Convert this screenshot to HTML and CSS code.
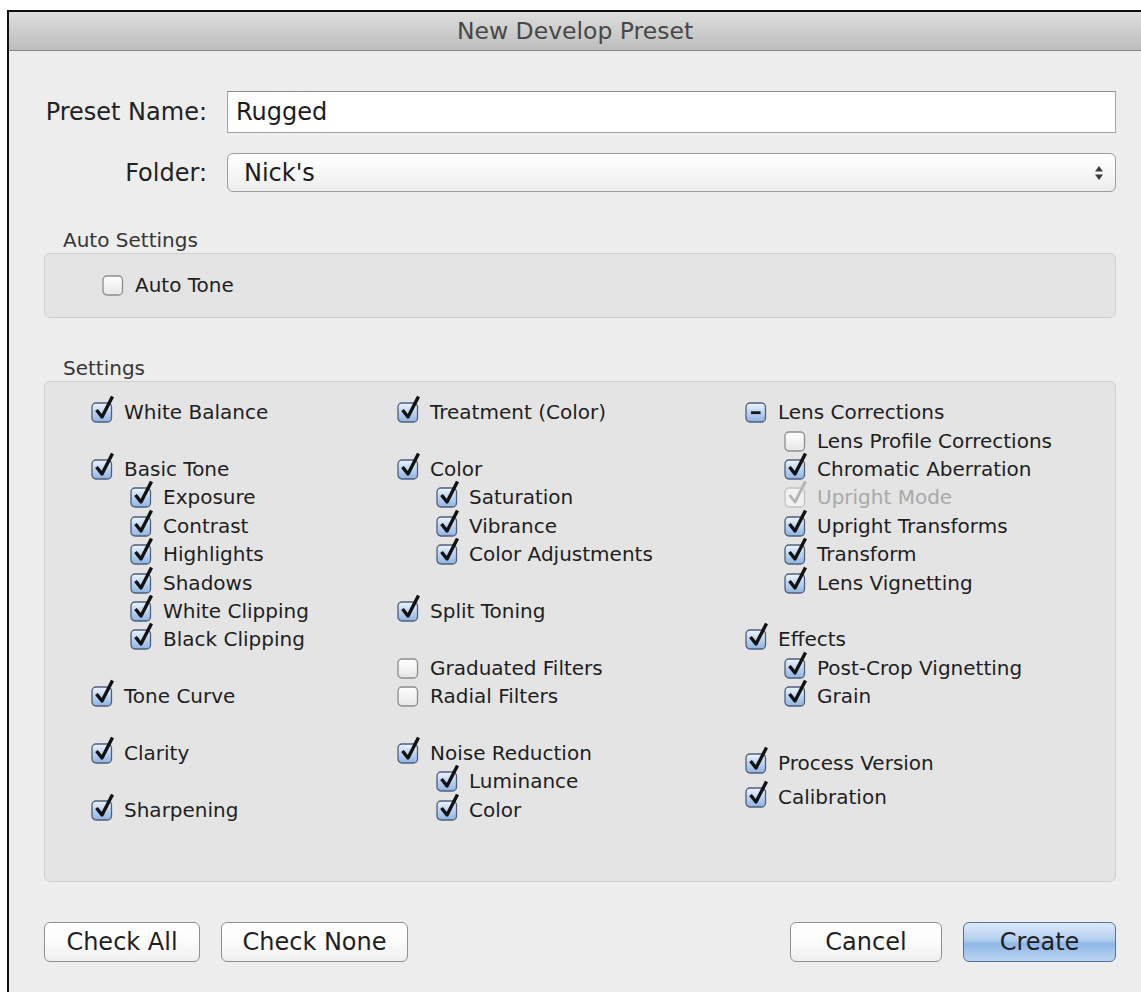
FILE: index.html
```html
<!DOCTYPE html>
<html lang="en">
<head>
<meta charset="utf-8">
<title>New Develop Preset</title>
<link rel="stylesheet" href="styles.css">
</head>
<body>
<!-- shared checkbox artwork -->
<svg class="defs" aria-hidden="true">
  <defs>
    <linearGradient id="g-blue" x1="0" y1="0" x2="0" y2="1">
      <stop offset="0" stop-color="#eef5fd"/>
      <stop offset="0.5" stop-color="#bcd3f0"/>
      <stop offset="1" stop-color="#8fb3e2"/>
    </linearGradient>
    <linearGradient id="g-white" x1="0" y1="0" x2="0" y2="1">
      <stop offset="0" stop-color="#ffffff"/>
      <stop offset="1" stop-color="#e6e6e6"/>
    </linearGradient>
    <symbol id="cb-on" viewBox="0 0 24 28">
      <rect x="1" y="8" width="19.5" height="19" rx="4" fill="url(#g-blue)" stroke="#4e5f7c" stroke-width="1.3"/>
      <path d="M5.5 15 L11 22 L21.5 1.5" fill="none" stroke="#121212" stroke-width="3.4" stroke-linejoin="round"/>
    </symbol>
    <symbol id="cb-off" viewBox="0 0 24 28">
      <rect x="1" y="8" width="19.5" height="19" rx="4" fill="url(#g-white)" stroke="#8d8d8d" stroke-width="1.3"/>
    </symbol>
    <symbol id="cb-mixed" viewBox="0 0 24 28">
      <rect x="1" y="8" width="19.5" height="19" rx="4" fill="url(#g-blue)" stroke="#4e5f7c" stroke-width="1.3"/>
      <rect x="6" y="16.3" width="9.5" height="2.8" fill="#151515"/>
    </symbol>
    <symbol id="cb-dim" viewBox="0 0 24 28">
      <rect x="1" y="8" width="19.5" height="19" rx="4" fill="#f1f1f1" stroke="#c2c2c2" stroke-width="1.3"/>
      <path d="M5.5 15 L11 22 L21.5 1.5" fill="none" stroke="#b4b4b4" stroke-width="2.8" stroke-linejoin="round"/>
    </symbol>
  </defs>
</svg>

<div class="dialog">
  <div class="titlebar">New Develop Preset</div>

  <div class="content">
    <div class="field">
      <label class="field-label">Preset Name:</label>
      <div class="textbox">Rugged</div>
    </div>
    <div class="field">
      <label class="field-label">Folder:</label>
      <div class="popup">
        <span>Nick's</span>
        <svg class="stepper" viewBox="0 0 10 16" width="10" height="16">
          <path d="M1 6.5 L5 1 L9 6.5 Z" fill="#3a3a3a"/>
          <path d="M1 9.5 L5 15 L9 9.5 Z" fill="#3a3a3a"/>
        </svg>
      </div>
    </div>

    <div class="group-title first">Auto Settings</div>
    <div class="group auto">
      <div class="item"><svg class="cb"><use href="#cb-off"/></svg>Auto Tone</div>
    </div>

    <div class="group-title">Settings</div>
    <div class="group settings">
      <div class="col">
        <div class="item"><svg class="cb"><use href="#cb-on"/></svg>White Balance</div>
        <div class="blank"></div>
        <div class="item"><svg class="cb"><use href="#cb-on"/></svg>Basic Tone</div>
        <div class="item sub"><svg class="cb"><use href="#cb-on"/></svg>Exposure</div>
        <div class="item sub"><svg class="cb"><use href="#cb-on"/></svg>Contrast</div>
        <div class="item sub"><svg class="cb"><use href="#cb-on"/></svg>Highlights</div>
        <div class="item sub"><svg class="cb"><use href="#cb-on"/></svg>Shadows</div>
        <div class="item sub"><svg class="cb"><use href="#cb-on"/></svg>White Clipping</div>
        <div class="item sub"><svg class="cb"><use href="#cb-on"/></svg>Black Clipping</div>
        <div class="blank"></div>
        <div class="item"><svg class="cb"><use href="#cb-on"/></svg>Tone Curve</div>
        <div class="blank"></div>
        <div class="item"><svg class="cb"><use href="#cb-on"/></svg>Clarity</div>
        <div class="blank"></div>
        <div class="item"><svg class="cb"><use href="#cb-on"/></svg>Sharpening</div>
      </div>

      <div class="col">
        <div class="item"><svg class="cb"><use href="#cb-on"/></svg>Treatment (Color)</div>
        <div class="blank"></div>
        <div class="item"><svg class="cb"><use href="#cb-on"/></svg>Color</div>
        <div class="item sub"><svg class="cb"><use href="#cb-on"/></svg>Saturation</div>
        <div class="item sub"><svg class="cb"><use href="#cb-on"/></svg>Vibrance</div>
        <div class="item sub"><svg class="cb"><use href="#cb-on"/></svg>Color Adjustments</div>
        <div class="blank"></div>
        <div class="item"><svg class="cb"><use href="#cb-on"/></svg>Split Toning</div>
        <div class="blank"></div>
        <div class="item"><svg class="cb"><use href="#cb-off"/></svg>Graduated Filters</div>
        <div class="item"><svg class="cb"><use href="#cb-off"/></svg>Radial Filters</div>
        <div class="blank"></div>
        <div class="item"><svg class="cb"><use href="#cb-on"/></svg>Noise Reduction</div>
        <div class="item sub"><svg class="cb"><use href="#cb-on"/></svg>Luminance</div>
        <div class="item sub"><svg class="cb"><use href="#cb-on"/></svg>Color</div>
      </div>

      <div class="col">
        <div class="item"><svg class="cb"><use href="#cb-mixed"/></svg>Lens Corrections</div>
        <div class="item sub"><svg class="cb"><use href="#cb-off"/></svg>Lens Profile Corrections</div>
        <div class="item sub"><svg class="cb"><use href="#cb-on"/></svg>Chromatic Aberration</div>
        <div class="item sub disabled"><svg class="cb"><use href="#cb-dim"/></svg>Upright Mode</div>
        <div class="item sub"><svg class="cb"><use href="#cb-on"/></svg>Upright Transforms</div>
        <div class="item sub"><svg class="cb"><use href="#cb-on"/></svg>Transform</div>
        <div class="item sub"><svg class="cb"><use href="#cb-on"/></svg>Lens Vignetting</div>
        <div class="blank"></div>
        <div class="item"><svg class="cb"><use href="#cb-on"/></svg>Effects</div>
        <div class="item sub"><svg class="cb"><use href="#cb-on"/></svg>Post-Crop Vignetting</div>
        <div class="item sub"><svg class="cb"><use href="#cb-on"/></svg>Grain</div>
        <div class="item spaced"><svg class="cb"><use href="#cb-on"/></svg>Process Version</div>
        <div class="item nudged"><svg class="cb"><use href="#cb-on"/></svg>Calibration</div>
      </div>
    </div>

    <div class="buttons">
      <div class="btn-group">
        <button class="btn check-all">Check All</button>
        <button class="btn check-none">Check None</button>
      </div>
      <div class="btn-group">
        <button class="btn cancel">Cancel</button>
        <button class="btn primary">Create</button>
      </div>
    </div>
  </div>
</div>
</body>
</html>
```

FILE: styles.css
```css
html, body {
  margin: 0;
  padding: 0;
  background: #ffffff;
}

body {
  font-family: "DejaVu Sans", "Liberation Sans", sans-serif;
  color: #1c1c1c;
  overflow: hidden;
}

.defs {
  position: absolute;
  width: 0;
  height: 0;
  overflow: hidden;
}

.dialog {
  margin: 10px 0 0 7px;
  height: 982px;
  border-top: 2px solid #101010;
  border-left: 2px solid #101010;
  background: #ededed;
  box-sizing: border-box;
}

.titlebar {
  height: 38px;
  line-height: 38px;
  text-align: center;
  font-size: 23.5px;
  color: #474747;
  background: linear-gradient(#dedede, #d0d0d0 40%, #bdbdbd);
  border-bottom: 1px solid #868686;
}

.content {
  padding: 40px 25px 0 0;
}

/* name / folder rows */
.field {
  display: flex;
  align-items: center;
  margin-bottom: 20px;
}

.field-label {
  width: 198px;
  margin-right: 20px;
  text-align: right;
  font-size: 24px;
  color: #222;
}

.textbox {
  flex: 1;
  height: 42px;
  box-sizing: border-box;
  padding: 0 8px;
  display: flex;
  align-items: center;
  font-size: 24px;
  background: #fefefe;
  border: 1px solid #a2a2a2;
  border-top-color: #8c8c8c;
}

.popup {
  flex: 1;
  height: 39px;
  box-sizing: border-box;
  padding: 0 11px 0 16px;
  display: flex;
  align-items: center;
  justify-content: space-between;
  font-size: 24px;
  border: 1px solid #9c9c9c;
  border-radius: 6px;
  background: linear-gradient(#ffffff, #f7f7f7 50%, #ececec);
}

.stepper {
  display: block;
}

/* grouped boxes */
.group-title {
  margin: 38px 0 0 54px;
  height: 24px;
  line-height: 24px;
  font-size: 20px;
  color: #363636;
}

.group-title.first {
  margin-top: 36px;
}

.group {
  margin: 1px 0 0 35px;
  border: 1px solid #cfcfcf;
  border-radius: 6px;
  background: #e4e4e4;
  box-sizing: border-box;
}

.group.auto {
  height: 65px;
  padding-left: 57px;
  display: flex;
  align-items: center;
}

.group.settings {
  height: 501px;
  padding: 16px 0 0 46px;
  display: grid;
  grid-template-columns: 306px 348px 1fr;
  align-items: start;
}

.col {
  display: flex;
  flex-direction: column;
}

.item {
  height: 28.4px;
  display: flex;
  align-items: center;
  font-size: 20px;
  color: #1e1e1e;
  white-space: nowrap;
}

.blank {
  height: 28.4px;
}

.item.sub {
  padding-left: 39px;
}

.item.disabled {
  color: #a9a9a9;
}

.item.spaced {
  margin-top: 39px;
}

.item.nudged {
  margin-top: 5px;
}

.cb {
  width: 24px;
  height: 28px;
  flex: none;
  margin: -6px 9px 0 0;
}

/* bottom buttons */
.buttons {
  margin: 40px 0 0 35px;
  display: flex;
  justify-content: space-between;
}

.btn-group {
  display: flex;
  gap: 21px;
}

.btn {
  height: 40px;
  box-sizing: border-box;
  padding: 0;
  font-family: inherit;
  font-size: 24px;
  color: #1f1f1f;
  border: 1px solid #8f8f8f;
  border-radius: 6px;
  background: linear-gradient(#ffffff, #fbfbfb 50%, #efefef);
}

.check-all { width: 156px; }
.check-none { width: 187px; }
.cancel { width: 152px; }

.btn.primary {
  width: 153px;
  border-color: #56719b;
  background: linear-gradient(#dbe9f8, #b3cff0 45%, #8fb7e6 55%, #bcd6f3);
}
```
